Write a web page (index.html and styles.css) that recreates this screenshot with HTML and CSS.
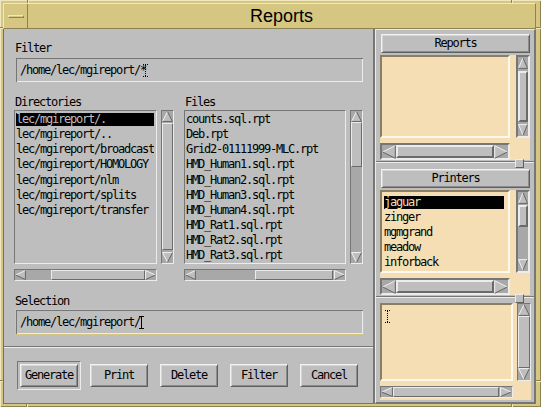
FILE: index.html
```html
<!DOCTYPE html>
<html>
<head>
<meta charset="utf-8">
<title>Reports</title>
<link rel="stylesheet" href="styles.css">
</head>
<body>
<div class="frame">
  <span class="mark mv mk-t1"></span><span class="mark mv mk-t2"></span>
  <span class="mark mv mk-b1"></span><span class="mark mv mk-b2"></span>
  <span class="mark mh mk-l1"></span><span class="mark mh mk-l2"></span>
  <span class="mark mh mk-r1"></span><span class="mark mh mk-r2"></span>

  <div class="titlebar">
    <div class="menubtn"><span class="dash"></span></div>
    <div class="title">Reports</div>
  </div>

  <div class="client">
    <div class="fsb">
      <div class="lbl">Filter</div>
      <div class="field">
        <span class="txt">/home/lec/mgireport/*</span>
        <svg class="caret dcaret" viewBox="0 0 5 13"><path d="M0 .5H5M0 12.5H5M2.5 1V12"/></svg>
      </div>

      <div class="lists">
        <div class="col dirs">
          <div class="lbl">Directories</div>
          <div class="lrow">
            <div class="list">
              <div class="it sel">lec/mgireport/.</div>
              <div class="it">lec/mgireport/..</div>
              <div class="it">lec/mgireport/broadcast</div>
              <div class="it">lec/mgireport/HOMOLOGY</div>
              <div class="it">lec/mgireport/nlm</div>
              <div class="it">lec/mgireport/splits</div>
              <div class="it">lec/mgireport/transfer</div>
            </div>
            <div class="sb s v">
              <svg class="arr" viewBox="0 0 10 10" preserveAspectRatio="none"><polygon points="5,.5 .5,9.5 9.5,9.5"/><path class="lt" d="M.5 9.5L5 .5"/><path class="dk" d="M5 .5L9.5 9.5H.5"/></svg>
              <div class="tr"><div class="sl" style="margin-top:1px;height:127px"></div></div>
              <svg class="arr" viewBox="0 0 10 10" preserveAspectRatio="none"><polygon points=".5,.5 9.5,.5 5,9.5"/><path class="lt" d="M5 9.5L.5 .5H9.5"/><path class="dk" d="M9.5 .5L5 9.5"/></svg>
            </div>
          </div>
          <div class="sb s h">
            <svg class="arr" viewBox="0 0 10 10" preserveAspectRatio="none"><polygon points=".5,5 9.5,.5 9.5,9.5"/><path class="lt" d="M.5 5L9.5 .5"/><path class="dk" d="M9.5 .5V9.5L.5 5"/></svg>
            <div class="tr"><div class="sl" style="margin-left:25px;width:94px"></div></div>
            <svg class="arr" viewBox="0 0 10 10" preserveAspectRatio="none"><polygon points=".5,.5 9.5,5 .5,9.5"/><path class="lt" d="M.5 9.5V.5L9.5 5"/><path class="dk" d="M9.5 5L.5 9.5"/></svg>
          </div>
        </div>

        <div class="col files">
          <div class="lbl">Files</div>
          <div class="lrow">
            <div class="list">
              <div class="it">counts.sql.rpt</div>
              <div class="it">Deb.rpt</div>
              <div class="it">Grid2-01111999-MLC.rpt</div>
              <div class="it">HMD_Human1.sql.rpt</div>
              <div class="it">HMD_Human2.sql.rpt</div>
              <div class="it">HMD_Human3.sql.rpt</div>
              <div class="it">HMD_Human4.sql.rpt</div>
              <div class="it">HMD_Rat1.sql.rpt</div>
              <div class="it">HMD_Rat2.sql.rpt</div>
              <div class="it">HMD_Rat3.sql.rpt</div>
            </div>
            <div class="sb s v">
              <svg class="arr" viewBox="0 0 10 10" preserveAspectRatio="none"><polygon points="5,.5 .5,9.5 9.5,9.5"/><path class="lt" d="M.5 9.5L5 .5"/><path class="dk" d="M5 .5L9.5 9.5H.5"/></svg>
              <div class="tr"><div class="sl" style="margin-top:0;height:45px"></div></div>
              <svg class="arr" viewBox="0 0 10 10" preserveAspectRatio="none"><polygon points=".5,.5 9.5,.5 5,9.5"/><path class="lt" d="M5 9.5L.5 .5H9.5"/><path class="dk" d="M9.5 .5L5 9.5"/></svg>
            </div>
          </div>
          <div class="sb s h">
            <svg class="arr" viewBox="0 0 10 10" preserveAspectRatio="none"><polygon points=".5,5 9.5,.5 9.5,9.5"/><path class="lt" d="M.5 5L9.5 .5"/><path class="dk" d="M9.5 .5V9.5L.5 5"/></svg>
            <div class="tr"><div class="sl" style="margin-left:59px;width:78px"></div></div>
            <svg class="arr" viewBox="0 0 10 10" preserveAspectRatio="none"><polygon points=".5,.5 9.5,5 .5,9.5"/><path class="lt" d="M.5 9.5V.5L9.5 5"/><path class="dk" d="M9.5 5L.5 9.5"/></svg>
          </div>
        </div>
      </div>

      <div class="lbl sel-lbl">Selection</div>
      <div class="field focus">
        <span class="txt">/home/lec/mgireport/</span>
        <svg class="caret scaret" viewBox="0 0 5 13"><path d="M0 .5H5M0 12.5H5M2.5 1V12"/></svg>
      </div>

      <div class="hsep"></div>

      <div class="btns">
        <div class="defring"><div class="btn">Generate</div></div>
        <div class="btn">Print</div>
        <div class="btn">Delete</div>
        <div class="btn">Filter</div>
        <div class="btn">Cancel</div>
      </div>
    </div>

    <div class="side">
      <div class="pane p1">
        <div class="pbtn">Reports</div>
        <div class="sw swm">
          <div class="wl"></div>
          <div class="sb m v">
            <svg class="arr" viewBox="0 0 10 10" preserveAspectRatio="none"><polygon points="5,.5 .5,9.5 9.5,9.5"/><path class="lt" d="M.5 9.5L5 .5"/><path class="dk" d="M5 .5L9.5 9.5H.5"/></svg>
            <div class="tr"><div class="sl" style="margin-top:2px;height:51px"></div></div>
            <svg class="arr" viewBox="0 0 10 10" preserveAspectRatio="none"><polygon points=".5,.5 9.5,.5 5,9.5"/><path class="lt" d="M5 9.5L.5 .5H9.5"/><path class="dk" d="M9.5 .5L5 9.5"/></svg>
          </div>
          <div class="sb m h">
            <svg class="arr" viewBox="0 0 10 10" preserveAspectRatio="none"><polygon points=".5,5 9.5,.5 9.5,9.5"/><path class="lt" d="M.5 5L9.5 .5"/><path class="dk" d="M9.5 .5V9.5L.5 5"/></svg>
            <div class="tr"><div class="sl" style="margin-left:0;width:98px"></div></div>
            <svg class="arr" viewBox="0 0 10 10" preserveAspectRatio="none"><polygon points=".5,.5 9.5,5 .5,9.5"/><path class="lt" d="M.5 9.5V.5L9.5 5"/><path class="dk" d="M9.5 5L.5 9.5"/></svg>
          </div>
        </div>
      </div>

      <div class="psep"><span class="sash"></span></div>

      <div class="pane p2">
        <div class="pbtn">Printers</div>
        <div class="sw swm">
          <div class="wl">
            <div class="pit sel">jaguar</div>
            <div class="pit">zinger</div>
            <div class="pit">mgmgrand</div>
            <div class="pit">meadow</div>
            <div class="pit">inforback</div>
          </div>
          <div class="sb m v">
            <svg class="arr" viewBox="0 0 10 10" preserveAspectRatio="none"><polygon points="5,.5 .5,9.5 9.5,9.5"/><path class="lt" d="M.5 9.5L5 .5"/><path class="dk" d="M5 .5L9.5 9.5H.5"/></svg>
            <div class="tr"><div class="sl" style="margin-top:1px;height:22px"></div></div>
            <svg class="arr" viewBox="0 0 10 10" preserveAspectRatio="none"><polygon points=".5,.5 9.5,.5 5,9.5"/><path class="lt" d="M5 9.5L.5 .5H9.5"/><path class="dk" d="M9.5 .5L5 9.5"/></svg>
          </div>
          <div class="sb m h">
            <svg class="arr" viewBox="0 0 10 10" preserveAspectRatio="none"><polygon points=".5,5 9.5,.5 9.5,9.5"/><path class="lt" d="M.5 5L9.5 .5"/><path class="dk" d="M9.5 .5V9.5L.5 5"/></svg>
            <div class="tr"><div class="sl" style="margin-left:0;width:98px"></div></div>
            <svg class="arr" viewBox="0 0 10 10" preserveAspectRatio="none"><polygon points=".5,.5 9.5,5 .5,9.5"/><path class="lt" d="M.5 9.5V.5L9.5 5"/><path class="dk" d="M9.5 5L.5 9.5"/></svg>
          </div>
        </div>
      </div>

      <div class="psep"><span class="sash"></span></div>

      <div class="pane p3">
        <div class="sw swt">
          <div class="wt">
            <svg class="caret tcaret" viewBox="0 0 5 13"><path d="M0 .5H5M0 12.5H5M2.5 1V12"/></svg>
          </div>
          <div class="sb t v">
            <svg class="arr" viewBox="0 0 10 10" preserveAspectRatio="none"><polygon points="5,.5 .5,9.5 9.5,9.5"/><path class="lt" d="M.5 9.5L5 .5"/><path class="dk" d="M5 .5L9.5 9.5H.5"/></svg>
            <div class="tr"><div class="sl" style="margin-top:0;height:52px"></div></div>
            <svg class="arr" viewBox="0 0 10 10" preserveAspectRatio="none"><polygon points=".5,.5 9.5,.5 5,9.5"/><path class="lt" d="M5 9.5L.5 .5H9.5"/><path class="dk" d="M9.5 .5L5 9.5"/></svg>
          </div>
          <div class="sb t h">
            <svg class="arr" viewBox="0 0 10 10" preserveAspectRatio="none"><polygon points=".5,5 9.5,.5 9.5,9.5"/><path class="lt" d="M.5 5L9.5 .5"/><path class="dk" d="M9.5 .5V9.5L.5 5"/></svg>
            <div class="tr"><div class="sl" style="margin-left:0;width:106px"></div></div>
            <svg class="arr" viewBox="0 0 10 10" preserveAspectRatio="none"><polygon points=".5,.5 9.5,5 .5,9.5"/><path class="lt" d="M.5 9.5V.5L9.5 5"/><path class="dk" d="M9.5 5L.5 9.5"/></svg>
          </div>
        </div>
      </div>
    </div>
  </div>
</div>
</body>
</html>
```

FILE: styles.css
```css
* { box-sizing: border-box; }
html, body { margin: 0; padding: 0; }
body {
  width: 541px; height: 407px; overflow: hidden;
  background: #d5c782;
  font-family: "DejaVu Sans Mono", "Liberation Mono", monospace;
  font-size: 12px;
  letter-spacing: -1.22px;
  color: #000;
}

/* ---------- window frame ---------- */
.frame {
  position: relative;
  width: 541px; height: 407px;
  padding: 3px 5px 3px 3px;
  display: flex; flex-direction: column;
  background: #d5c782;
  box-shadow: inset 1px 1px 0 #efe7bf, inset -1px -1px 0 #8d8253;
}
.mark { position: absolute; background: #8d8253; }
.mv { width: 1px; box-shadow: 1px 0 0 #efe7bf; }
.mh { height: 1px; box-shadow: 0 1px 0 #efe7bf; }
.mk-t1 { left: 27px; top: 0; height: 3px; }
.mk-t2 { left: 511px; top: 0; height: 3px; }
.mk-b1 { left: 26px; bottom: 0; height: 3px; }
.mk-b2 { left: 511px; bottom: 0; height: 3px; }
.mk-l1 { left: 0; top: 27px; width: 3px; }
.mk-l2 { left: 0; top: 380px; width: 3px; }
.mk-r1 { right: 0; top: 27px; width: 5px; }
.mk-r2 { right: 0; top: 380px; width: 5px; }

.titlebar {
  flex: none;
  height: 26px;
  display: flex;
  border: 1px solid;
  border-color: #efe7bf #8d8253 #8d8253 #efe7bf;
}
.menubtn {
  flex: none; width: 24px;
  border-right: 1px solid #8d8253;
  display: flex; align-items: center; justify-content: center;
}
.dash {
  width: 16px; height: 3px;
  border: 1px solid;
  border-color: #efe7bf #8d8253 #8d8253 #efe7bf;
}
.title {
  flex: 1;
  text-align: center;
  font-family: "Liberation Sans", Arial, sans-serif;
  font-size: 18px;
  letter-spacing: 0;
  line-height: 24px;
}

.client {
  flex: none;
  height: 375px;
  display: flex;
  border-left: 1px solid #6e6e6e;
  background: #bebebe;
}

/* ---------- file selection box ---------- */
.fsb {
  flex: none;
  width: 371px; height: 375px;
  border-right: 2px solid #767676;
  border-bottom: 1px solid #767676;
  padding: 12px 0 0 11px;
  display: flex; flex-direction: column;
}
.lbl { flex: none; height: 15px; line-height: 15px; white-space: pre; }
.sel-lbl { margin-top: 13px; }

.field {
  flex: none;
  width: 349px; height: 26px;
  margin-top: 1px;
  border: 1px solid #bebebe;
  box-shadow: inset 1px 1px 0 #767676, inset -1px -1px 0 #ececec;
  padding-left: 4px;
  display: flex; align-items: center;
  line-height: 15px;
  white-space: pre;
}
.field.focus { margin-top: 0; border-color: #d5c782; }
.caret { flex: none; width: 5px; height: 13px; display: block; }
.caret path { fill: none; stroke: #000; stroke-width: 1; }
.scaret { margin-left: -1px; }
.dcaret { margin-left: -3px; }
.dcaret path, .tcaret path { stroke-dasharray: 1 1; }

.lists { flex: none; display: flex; margin-top: 12px; margin-left: -1px; }
.col { flex: none; display: flex; flex-direction: column; }
.col .lbl { padding-left: 1px; }
.dirs { width: 160px; }
.files { width: 179px; margin-left: 10px; }
.lrow { display: flex; gap: 4px; height: 154px; }
.list {
  flex: none;
  height: 154px;
  border: 1px solid;
  border-color: #767676 #ececec #ececec #767676;
  padding: 1px 2px 0 1px;
  overflow: hidden;
}
.dirs .list { width: 143px; }
.files .list { width: 162px; }
.it { height: 15.125px; line-height: 15.125px; white-space: pre; overflow: hidden; }
.it.sel, .pit.sel {
  background: linear-gradient(#000, #000) 0 1px / 100% 13px no-repeat;
  color: #bebebe;
}
.dirs .sb.h { width: 143px; }
.files .sb.h { width: 162px; }
.col .sb.h { margin-top: 5px; height: 12px; }
.col .sb.v { width: 13px; }

/* ---------- scrollbars ---------- */
.sb {
  flex: none;
  display: flex;
  background: #a8a8a8;
  border-style: solid;
  border-color: #767676 #ececec #ececec #767676;
  border-width: 1px;
}
.sb.v { flex-direction: column; }
.sb .tr { flex: 1; display: flex; min-width: 0; min-height: 0; }
.sb.v .tr { flex-direction: column; }
.sl {
  flex: none;
  background: #bebebe;
  border: 1px solid;
  border-color: #ececec #6a6a6a #6a6a6a #ececec;
}
.sb.v .sl { width: 100%; }
.sb.h .sl { height: 100%; }
.sb.m { border-width: 2px; }
.sb.m .sl { border-width: 2px; }

.arr { display: block; flex: none; }
.arr polygon { fill: #bebebe; }
.arr path { fill: none; stroke-width: 1; vector-effect: non-scaling-stroke; }
.arr .lt { stroke: #f0f0f0; }
.arr .dk { stroke: #666; }
.sb.s.v .arr { width: 11px; height: 11px; }
.sb.s.h .arr { width: 11px; height: 10px; }
.sb.m.v .arr { width: 10px; height: 12px; }
.sb.m.h .arr { width: 14px; height: 14px; }
.sb.t.v .arr { width: 12px; height: 12px; }
.sb.t.h .arr { width: 12px; height: 10px; }

/* ---------- separator + buttons ---------- */
.hsep {
  flex: none;
  margin: 11px 0 0 -11px;
  width: 369px; height: 2px;
  border-top: 1px solid #767676;
  border-bottom: 1px solid #ececec;
}
.btns { flex: none; display: flex; align-items: center; height: 29px; margin: 13px 0 0 2px; }
.defring {
  flex: none;
  width: 64px; height: 29px;
  padding: 2px;
  border: 1px solid;
  border-color: #767676 #ececec #ececec #767676;
}
.btn {
  flex: none;
  width: 58px; height: 23px;
  border: 1px solid;
  border-color: #f2f2f2 #5f5f5f #5f5f5f #f2f2f2;
  box-shadow: inset 1px 1px 0 #d6d6d6, inset -1px -1px 0 #8c8c8c;
  display: flex; align-items: center; justify-content: center;
  line-height: 15px;
  white-space: pre;
}
.defring + .btn { margin-left: 9px; }
.btns > .btn + .btn { margin-left: 12px; }

/* ---------- side paned window ---------- */
.side {
  flex: none;
  position: relative;
  width: 161px; height: 375px;
  border-top: 1px solid #ececec;
  border-left: 1px solid #ececec;
  border-right: 2px solid #767676;
  border-bottom: 2px solid #767676;
  display: flex; flex-direction: column;
}
.pane { flex: none; display: flex; flex-direction: column; }
.p1 { padding-top: 4px; }
.p2 { padding-top: 5px; }
.p3 { padding-top: 4px; }
.pbtn {
  flex: none;
  margin-left: 5px;
  width: 149px; height: 19px;
  margin-bottom: 2px;
  border: 1px solid;
  border-color: #f2f2f2 #5f5f5f #5f5f5f #f2f2f2;
  box-shadow: inset 1px 1px 0 #d6d6d6, inset -1px -1px 0 #8c8c8c;
  display: flex; align-items: center; justify-content: center;
  line-height: 15px;
}
.sw {
  flex: none;
  margin-left: 4px;
  background: #f5deb3;
  display: grid;
}
.swm { width: 150px; height: 105px; grid-template-columns: 130px 6px 14px; grid-template-rows: 83px 5px 17px; }
.swt { width: 151px; height: 97px; grid-template-columns: 133px 4px 14px; grid-template-rows: 78px 5px 12px 2px; }
.sw .sb.v { grid-column: 3; grid-row: 1; }
.sw .sb.h { grid-column: 1; grid-row: 3; }
.swm .sb.h { width: 130px; }
.swt .sb.h { width: 133px; }

.wl, .wt {
  grid-column: 1; grid-row: 1;
  background: #f5deb3;
  border: 2px solid;
  border-color: #8b7e66 #fff8ec #fff8ec #8b7e66;
  overflow: hidden;
}
.wl { padding: 3px 4px 0 2px; }
.wt { padding: 5px 0 0 3px; }
.pit { height: 15px; line-height: 15px; white-space: pre; }
.pit.sel { color: #f5deb3; }

.psep { flex: none; position: relative; height: 4px; }
.psep::before {
  content: "";
  position: absolute; left: 0; right: 0; top: 1px;
  height: 1px;
  background: #767676;
  box-shadow: 0 1px 0 #ececec;
}
.sash {
  position: absolute;
  left: 139px; top: -1px;
  width: 9px; height: 9px;
  background: #bebebe;
  border: 1px solid;
  border-color: #ececec #5f5f5f #5f5f5f #ececec;
}
```
